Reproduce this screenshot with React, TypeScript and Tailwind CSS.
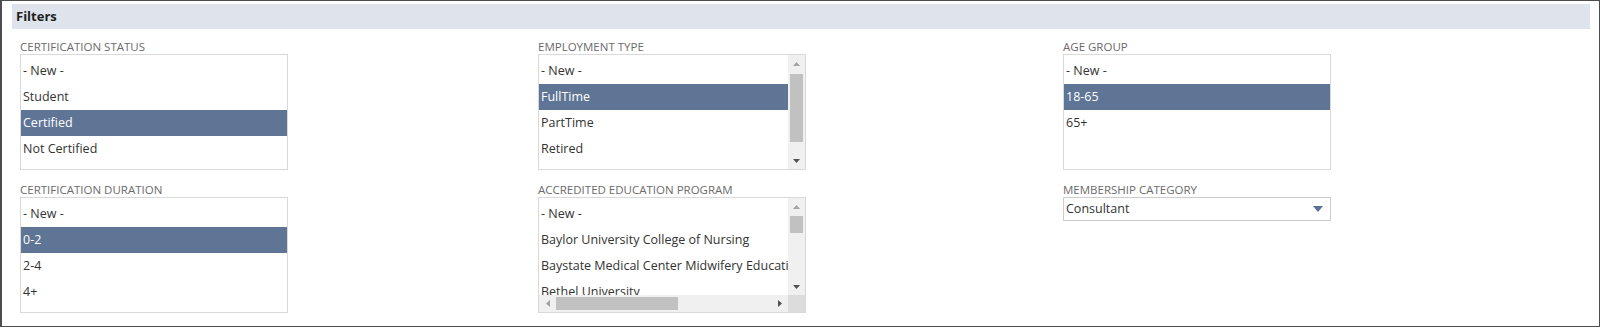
const font = { fontFamily: '"Open Sans", "Liberation Sans", sans-serif' };

type ListProps = {
  items: string[];
  selected?: number;
  vScroll?: { thumbTop: number; thumbHeight: number };
  hScroll?: boolean;
};

const UpArrow = () => (
  <svg width="7" height="4" viewBox="0 0 7 4">
    <path d="M0 4 L3.5 0 L7 4 Z" fill="#a3a3a3" />
  </svg>
);

const DownArrow = () => (
  <svg width="7" height="4" viewBox="0 0 7 4">
    <path d="M0 0 L7 0 L3.5 4 Z" fill="#505050" />
  </svg>
);

const LeftArrow = () => (
  <svg width="4" height="7" viewBox="0 0 4 7">
    <path d="M4 0 L4 7 L0 3.5 Z" fill="#a3a3a3" />
  </svg>
);

const RightArrow = () => (
  <svg width="4" height="7" viewBox="0 0 4 7">
    <path d="M0 0 L4 3.5 L0 7 Z" fill="#505050" />
  </svg>
);

const ListBox = ({ items, selected, vScroll, hScroll }: ListProps) => (
  <div className="w-[268px] h-[116px] border border-[#d9d9d9] bg-white flex flex-col overflow-hidden">
    <div className="flex flex-1 min-h-0">
      <div className="flex-1 min-w-0 pt-[3px] overflow-hidden">
        {items.map((item, i) => (
          <div
            key={item}
            className={
              'h-[26px] leading-[26px] pl-[2px] whitespace-nowrap text-[12.5px] ' +
              (i === selected ? 'bg-[#5f7596] text-white' : 'text-[#333333]')
            }
          >
            {item}
          </div>
        ))}
      </div>
      {vScroll && (
        <div className="w-[17px] bg-[#f0f0f0] flex flex-col items-center">
          <div className="h-[17px] flex items-center justify-center">
            <UpArrow />
          </div>
          <div className="relative flex-1 w-full">
            <div
              className="absolute left-[2px] right-[2px] bg-[#c1c1c1]"
              style={{ top: vScroll.thumbTop, height: vScroll.thumbHeight }}
            />
          </div>
          <div className="h-[17px] flex items-center justify-center">
            <DownArrow />
          </div>
        </div>
      )}
    </div>
    {hScroll && (
      <div className="h-[17px] flex bg-[#f0f0f0]">
        <div className="w-[17px] flex items-center justify-center">
          <LeftArrow />
        </div>
        <div className="flex-1 py-[2px]">
          <div className="w-[122px] h-full bg-[#c1c1c1]" />
        </div>
        <div className="w-[17px] flex items-center justify-center">
          <RightArrow />
        </div>
        <div className="w-[17px] bg-[#dcdcdc]" />
      </div>
    )}
  </div>
);

const Label = ({ children }: { children: string }) => (
  <div className="h-[14px] leading-[14px] text-[11.5px] text-[#6b6b6b] uppercase whitespace-nowrap">
    {children}
  </div>
);

const Field = ({ label, children }: { label: string; children: React.ReactNode }) => (
  <div className="flex flex-col">
    <Label>{label}</Label>
    {children}
  </div>
);

export default function App() {
  return (
    <div
      style={font}
      className="w-[1600px] h-[327px] bg-white border border-[#4d4d4d] border-l-2"
    >
      <div className="pl-[10px] pr-[9px] pt-[3px]">
        <div className="h-[25px] bg-[#dfe3eb] px-[4px] flex items-center text-[13px] font-bold text-[#222]">
          Filters
        </div>
      </div>
      <div className="pl-[18px] pt-[11px] grid grid-cols-[518px_525px_268px]">
        <div className="flex flex-col gap-[13px]">
          <Field label="Certification Status">
            <ListBox items={['- New -', 'Student', 'Certified', 'Not Certified']} selected={2} />
          </Field>
          <Field label="Certification Duration">
            <ListBox items={['- New -', '0-2', '2-4', '4+']} selected={1} />
          </Field>
        </div>
        <div className="flex flex-col gap-[13px]">
          <Field label="Employment Type">
            <ListBox
              items={['- New -', 'FullTime', 'PartTime', 'Retired']}
              selected={1}
              vScroll={{ thumbTop: 2, thumbHeight: 68 }}
            />
          </Field>
          <Field label="Accredited Education Program">
            <ListBox
              items={[
                '- New -',
                'Baylor University College of Nursing',
                'Baystate Medical Center Midwifery Education Program',
                'Bethel University',
              ]}
              vScroll={{ thumbTop: 1, thumbHeight: 17 }}
              hScroll
            />
          </Field>
        </div>
        <div className="flex flex-col gap-[13px]">
          <Field label="Age Group">
            <ListBox items={['- New -', '18-65', '65+']} selected={1} />
          </Field>
          <Field label="Membership Category">
            <div className="w-[268px] h-[24px] border border-[#cccccc] bg-white flex items-center justify-between pl-[2px] pr-[7px] text-[12.5px] text-[#333333]">
              <span>Consultant</span>
              <svg width="10" height="6" viewBox="0 0 10 6">
                <path d="M0 0 L10 0 L5 6 Z" fill="#5a7196" />
              </svg>
            </div>
          </Field>
        </div>
      </div>
    </div>
  );
}
